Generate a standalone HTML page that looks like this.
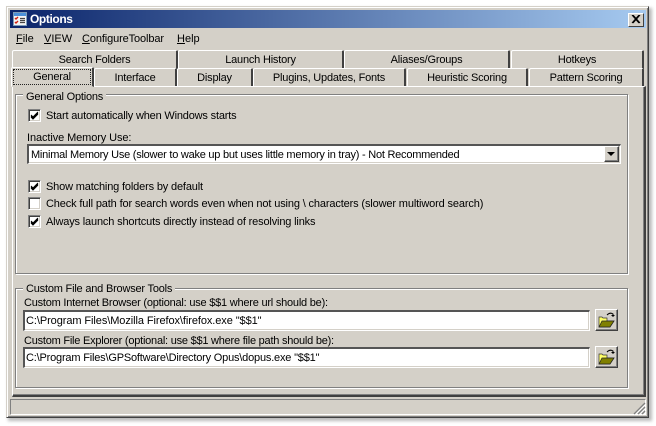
<!DOCTYPE html>
<html><head><meta charset="utf-8"><style>
html,body{margin:0;padding:0;background:#fff;}
#r{position:relative;width:656px;height:426px;overflow:hidden;background:#fff;font:11px/14px "Liberation Sans",sans-serif;color:#000;}
#r div,#r span.t{position:absolute;box-sizing:border-box;}
.t{white-space:nowrap;letter-spacing:-.18px;}
.tab{background:#d4d0c8;border-top:1px solid #fff;border-left:1px solid #fff;border-right:2px solid #404040;border-radius:2px 2px 0 0;text-align:center;line-height:18px;white-space:nowrap;letter-spacing:-.2px;}
.grp{border:1px solid #808080;box-shadow:inset 1px 1px 0 #fff,1px 1px 0 #fff;}
.cb{width:13px;height:13px;background:#fff;border:1px solid #808080;border-right-color:#fff;border-bottom-color:#fff;box-shadow:inset 1px 1px 0 #404040,inset -1px -1px 0 #d4d0c8;}
.ed{background:#fff;border:2px solid #555;border-right:1px solid #fff;border-bottom:1px solid #fff;box-shadow:inset -1px -1px 0 #d4d0c8;line-height:16px;padding-left:1px;white-space:nowrap;}
.btn{background:#d4d0c8;border:1px solid #fff;border-right-color:#404040;border-bottom-color:#404040;box-shadow:inset -1px -1px 0 #808080;}
</style></head><body><div id="r">
<div style="left:8px;top:8px;width:644px;height:413px;background:#bbb;filter:blur(1.5px)"></div>
<div style="left:6px;top:6px;width:643px;height:412px;background:#d4d0c8;border:1px solid #d4d0c8;border-right-color:#404040;border-bottom-color:#404040;box-shadow:inset 1px 1px 0 #fff,inset -1px -1px 0 #808080"></div>

<div style="left:10px;top:10px;width:636px;height:18px;background:linear-gradient(90deg,#0a246a,#a6caf0)"></div>
<svg style="position:absolute;left:13px;top:12px" width="14" height="14" viewBox="0 0 14 14">
<rect x=".5" y=".5" width="13" height="13" fill="#f4f4f4" stroke="#7f9db9"/><rect x="1" y="1" width="12" height="3" fill="#4a90d9"/>
<path d="M2 6l1 1 2-2M2 10l1 1 2-2" stroke="#d02010" stroke-width="1.4" fill="none"/><path d="M7 6.500h5M7 8.500h5M7 10.500h5" stroke="#444" stroke-width="1.200"/></svg>
<span class="t" style="left:30px;top:12px;color:#fff;font-weight:bold;font-size:12px;letter-spacing:-.4px">Options</span>
<div style="left:628px;top:13px;width:16px;height:14px;background:#d4d0c8;border:1px solid #fff;border-right-color:#404040;border-bottom-color:#404040"></div>
<svg style="position:absolute;left:631px;top:15px" width="10" height="9" viewBox="0 0 10 9"><path d="M1 0l7 8M2 0l7 8M8 0l-7 8M9 0l-7 8" stroke="#000" stroke-width="1" fill="none"/></svg>

<span class="t" style="left:16px;top:32px;letter-spacing:0"><u>F</u>ile</span>
<span class="t" style="left:44px;top:32px;letter-spacing:0"><u>V</u>IEW</span>
<span class="t" style="left:82px;top:32px;letter-spacing:-.12px"><u>C</u>onfigureToolbar</span>
<span class="t" style="left:177px;top:32px;letter-spacing:0"><u>H</u>elp</span>

<div class="tab" style="left:12px;top:50px;width:166px;height:19px">Search Folders</div>
<div class="tab" style="left:178px;top:50px;width:166px;height:19px">Launch History</div>
<div class="tab" style="left:344px;top:50px;width:166px;height:19px">Aliases/Groups</div>
<div class="tab" style="left:511px;top:50px;width:133px;height:19px">Hotkeys</div>

<div style="left:12px;top:86px;width:634px;height:311px;border:1px solid #fff;border-right:2px solid #404040;border-bottom:2px solid #404040;box-shadow:inset -1px -1px 0 #808080"></div>

<div class="tab" style="left:94px;top:68px;width:83px;height:18px">Interface</div>
<div class="tab" style="left:177px;top:68px;width:76px;height:18px">Display</div>
<div class="tab" style="left:253px;top:68px;width:153px;height:18px">Plugins, Updates, Fonts</div>
<div class="tab" style="left:407px;top:68px;width:121px;height:18px">Heuristic Scoring</div>
<div class="tab" style="left:529px;top:68px;width:115px;height:18px">Pattern Scoring</div>
<div class="tab" style="left:11px;top:67px;width:83px;height:20px;line-height:18px;border-bottom:1px solid #d4d0c8">General</div>
<div style="left:13px;top:69px;width:78px;height:16px;border:1px dotted #222"></div>

<div class="grp" style="left:15px;top:94px;width:613px;height:180px"></div>
<span class="t" style="left:23px;top:90px;padding:0 3px;background:#d4d0c8;letter-spacing:-.2px">General Options</span>

<div class="cb" style="left:28px;top:109px"></div>
<svg style="position:absolute;left:28px;top:109px" width="13" height="13"><path d="M3 6l2 2 5-5M3 7l2 2 5-5M3 8l2 2 5-5" stroke="#000" fill="none"/></svg>
<span class="t" style="left:46px;top:109px">Start automatically when Windows starts</span>

<span class="t" style="left:27px;top:131px;letter-spacing:-.1px">Inactive Memory Use:</span>
<div class="ed" style="left:27px;top:144px;width:594px;height:20px;padding-left:2px;line-height:19px;letter-spacing:-.24px">Minimal Memory Use (slower to wake up but uses little memory in tray) - Not Recommended</div>
<div class="btn" style="left:604px;top:146px;width:15px;height:16px"></div>
<svg style="position:absolute;left:607px;top:152px" width="9" height="5"><path d="M0 0h8L4 4z" fill="#000"/></svg>

<div class="cb" style="left:28px;top:180px"></div>
<svg style="position:absolute;left:28px;top:180px" width="13" height="13"><path d="M3 6l2 2 5-5M3 7l2 2 5-5M3 8l2 2 5-5" stroke="#000" fill="none"/></svg>
<span class="t" style="left:46px;top:180px;letter-spacing:-.16px">Show matching folders by default</span>
<div class="cb" style="left:28px;top:197px"></div>
<span class="t" style="left:46px;top:197px;letter-spacing:-.14px">Check full path for search words even when not using \ characters (slower multiword search)</span>
<div class="cb" style="left:28px;top:215px"></div>
<svg style="position:absolute;left:28px;top:215px" width="13" height="13"><path d="M3 6l2 2 5-5M3 7l2 2 5-5M3 8l2 2 5-5" stroke="#000" fill="none"/></svg>
<span class="t" style="left:46px;top:215px;letter-spacing:-.16px">Always launch shortcuts directly instead of resolving links</span>

<div class="grp" style="left:15px;top:288px;width:613px;height:100px"></div>
<span class="t" style="left:23px;top:282px;padding:0 3px;background:#d4d0c8;letter-spacing:-.2px">Custom File and Browser Tools</span>
<span class="t" style="left:24px;top:296px;letter-spacing:-.22px">Custom Internet Browser (optional: use $$1 where url should be):</span>
<div class="ed" style="left:23px;top:310px;width:567px;height:21px;padding-top:1px;letter-spacing:-.08px">C:\Program Files\Mozilla Firefox\firefox.exe "$$1"</div>
<span class="t" style="left:24px;top:334px;letter-spacing:-.23px">Custom File Explorer (optional: use $$1 where file path should be):</span>
<div class="ed" style="left:23px;top:347px;width:567px;height:21px;padding-top:1px;letter-spacing:-.19px">C:\Program Files\GPSoftware\Directory Opus\dopus.exe "$$1"</div>

<div class="btn" style="left:595px;top:309px;width:23px;height:22px"></div>
<svg style="position:absolute;left:598px;top:312px" width="18" height="16" viewBox="0 0 18 16"><path d="M9 3q3-3 6-1l0 2" stroke="#000" fill="none"/><path d="M13 3h4l-2 2z" fill="#000"/><path d="M1 5h3l1 1h4v3h7l-4 6H1z" fill="#ffff66" stroke="#333" stroke-width=".7"/><path d="M4 9h12l-4 6H1z" fill="#808000" stroke="#222" stroke-width=".7"/></svg>
<div class="btn" style="left:595px;top:346px;width:23px;height:22px"></div>
<svg style="position:absolute;left:598px;top:349px" width="18" height="16" viewBox="0 0 18 16"><path d="M9 3q3-3 6-1l0 2" stroke="#000" fill="none"/><path d="M13 3h4l-2 2z" fill="#000"/><path d="M1 5h3l1 1h4v3h7l-4 6H1z" fill="#ffff66" stroke="#333" stroke-width=".7"/><path d="M4 9h12l-4 6H1z" fill="#808000" stroke="#222" stroke-width=".7"/></svg>

<div style="left:10px;top:399px;width:636px;height:16px;border:1px solid #808080;border-right-color:#fff;border-bottom-color:#fff"></div>
<svg style="position:absolute;left:633px;top:402px" width="13" height="13"><path d="M12 1L1 12M12 5L5 12M12 9L9 12" stroke="#808080" stroke-width="1.300"/><path d="M12 3L3 12M12 7L7 12M12 11L11 12" stroke="#fff"/></svg>
</div></body></html>
